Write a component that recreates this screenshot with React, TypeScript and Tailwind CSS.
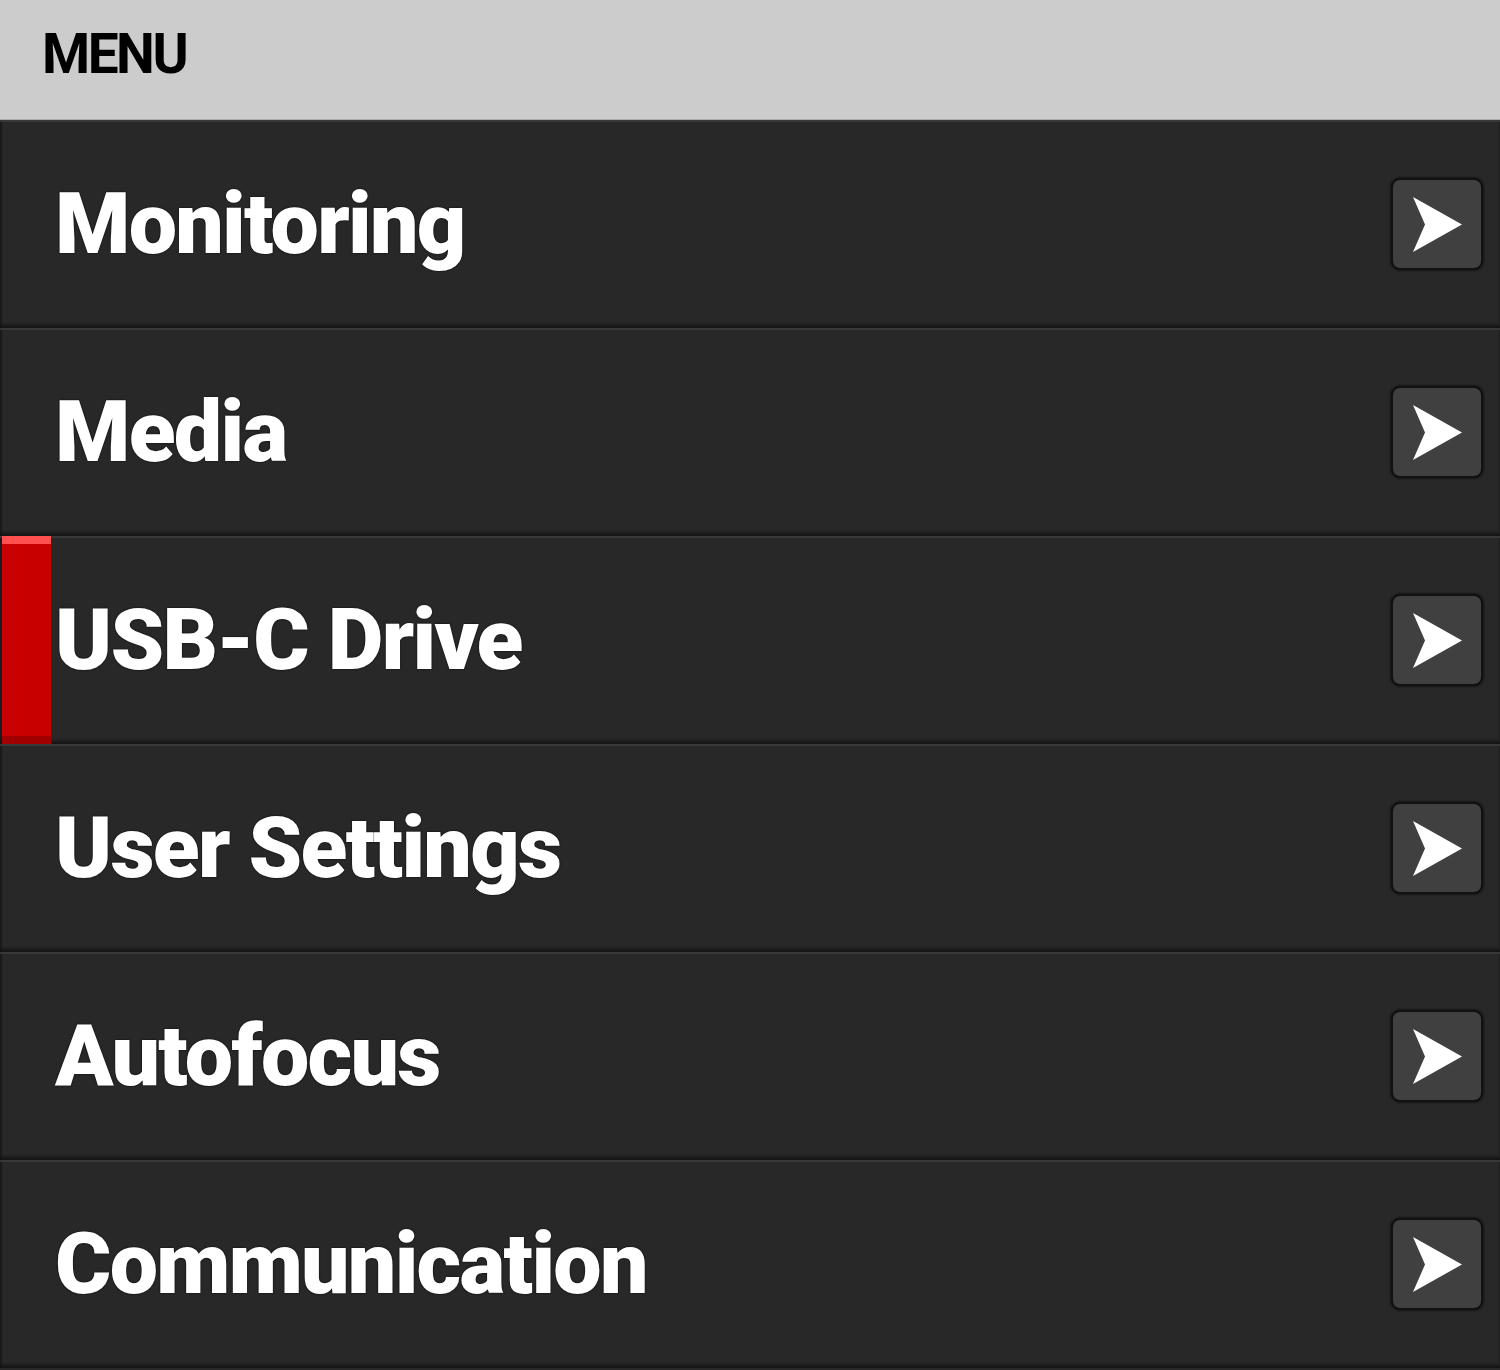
import React from 'react';

const items = ['Monitoring', 'Media', 'USB-C Drive', 'User Settings', 'Autofocus', 'Communication'];

const Arrow = () => (
  <svg width="49" height="55" viewBox="0 0 49 55" className="block">
    <polygon points="0,0 49,27.5 0,55 12,27.5" fill="#ffffff" />
  </svg>
);

const MenuRow: React.FC<{ label: string; active?: boolean }> = ({ label, active }) => (
  <div className="flex h-[208px] items-stretch bg-[#282828] pl-[2px] shadow-[inset_0_2px_0_#383838,inset_0_-3px_3px_#151515,inset_2px_0_0_#1e1e1e]">
    <div className="flex w-[49px] flex-col">
      {active && (
        <>
          <div className="h-[8px] bg-[#ff5050]" />
          <div className="flex-1 bg-[#c80000]" />
          <div className="h-[8px] bg-[#a00000]" />
        </>
      )}
    </div>
    <div className="flex flex-1 items-center pl-[4px] pr-[17px]">
      <span className="flex-1 text-[86px] font-black leading-none tracking-[-0.02em] text-white [text-shadow:0_0_2px_#000]">
        {label}
      </span>
      <button className="flex h-[92px] w-[92px] items-center justify-center rounded-[9px] border-2 border-[#111] bg-[#404040] shadow-[0_0_3px_#000]">
        <Arrow />
      </button>
    </div>
  </div>
);

export default function App() {
  return (
    <div className="min-h-screen bg-[#282828] font-['Roboto',sans-serif]">
      <header className="flex h-[120px] items-center border-b border-[#aaaaaa] bg-[#cccccc] pb-[10px] pl-[42px]">
        <h1 className="text-[55px] font-bold leading-none tracking-[-2.5px] text-black">MENU</h1>
      </header>
      {items.map((label) => (
        <MenuRow key={label} label={label} active={label === 'USB-C Drive'} />
      ))}
    </div>
  );
}
